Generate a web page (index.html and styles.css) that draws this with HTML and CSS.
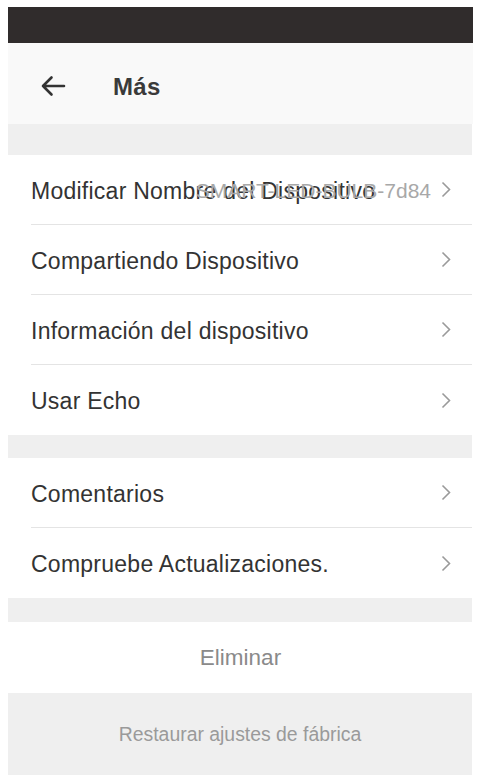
FILE: index.html
```html
<!DOCTYPE html>
<html lang="es">
<head>
<meta charset="utf-8">
<title>Más</title>
<link rel="stylesheet" href="styles.css">
</head>
<body>
<div class="screen">
  <div class="statusbar"></div>
  <header class="topbar">
    <svg class="back" width="26" height="22" viewBox="0 0 26 22" aria-hidden="true">
      <path d="M24 11H3M11.5 2.5L3 11l8.5 8.5" fill="none" stroke="#333" stroke-width="2.6" stroke-linecap="round" stroke-linejoin="round"/>
    </svg>
    <h1 class="title">Más</h1>
  </header>
  <div class="gap gap-top"></div>
  <ul class="card">
    <li class="row">
      <div class="row-text">
        <span class="label">Modificar Nombre del Dispositivo</span>
        <span class="value">SMART-LED-BULB-7d84</span>
      </div>
      <svg class="chev" width="10" height="17" viewBox="0 0 10 17" aria-hidden="true"><path d="M1.5 1.5l7 7-7 7" fill="none" stroke="#9a9a9a" stroke-width="1.6"/></svg>
    </li>
    <li class="row">
      <div class="row-text"><span class="label">Compartiendo Dispositivo</span></div>
      <svg class="chev" width="10" height="17" viewBox="0 0 10 17" aria-hidden="true"><path d="M1.5 1.5l7 7-7 7" fill="none" stroke="#9a9a9a" stroke-width="1.6"/></svg>
    </li>
    <li class="row">
      <div class="row-text"><span class="label">Información del dispositivo</span></div>
      <svg class="chev" width="10" height="17" viewBox="0 0 10 17" aria-hidden="true"><path d="M1.5 1.5l7 7-7 7" fill="none" stroke="#9a9a9a" stroke-width="1.6"/></svg>
    </li>
    <li class="row last">
      <div class="row-text"><span class="label">Usar Echo</span></div>
      <svg class="chev" width="10" height="17" viewBox="0 0 10 17" aria-hidden="true"><path d="M1.5 1.5l7 7-7 7" fill="none" stroke="#9a9a9a" stroke-width="1.6"/></svg>
    </li>
  </ul>
  <div class="gap gap-mid"></div>
  <ul class="card">
    <li class="row">
      <div class="row-text"><span class="label">Comentarios</span></div>
      <svg class="chev" width="10" height="17" viewBox="0 0 10 17" aria-hidden="true"><path d="M1.5 1.5l7 7-7 7" fill="none" stroke="#9a9a9a" stroke-width="1.6"/></svg>
    </li>
    <li class="row last">
      <div class="row-text"><span class="label">Compruebe Actualizaciones.</span></div>
      <svg class="chev" width="10" height="17" viewBox="0 0 10 17" aria-hidden="true"><path d="M1.5 1.5l7 7-7 7" fill="none" stroke="#9a9a9a" stroke-width="1.6"/></svg>
    </li>
  </ul>
  <div class="gap gap-bottom"></div>
  <div class="delete">Eliminar</div>
  <div class="reset">Restaurar ajustes de fábrica</div>
</div>
</body>
</html>
```
FILE: styles.css
```css
html, body {
  margin: 0;
  padding: 0;
  background: #ffffff;
}
body {
  font-family: "Liberation Sans", Arial, sans-serif;
  color: #333333;
}
.screen {
  width: 465px;
  margin: 7px 0 0 8px;
  display: flex;
  flex-direction: column;
}
.statusbar {
  height: 36px;
  background: #302c2c;
}
.topbar {
  height: 81px;
  background: #f9f9f9;
  display: flex;
  align-items: center;
  padding-left: 32px;
}
.back {
  display: block;
  margin-top: 4px;
}
.title {
  margin: 6px 0 0 47px;
  font-size: 24px;
  font-weight: bold;
  color: #3a3a3a;
  line-height: 1;
  letter-spacing: 0.3px;
}
.gap {
  background: #efefef;
  margin-right: 1px;
}
.gap-top { height: 31px; }
.gap-mid { height: 23px; }
.gap-bottom { height: 24px; }
.card {
  list-style: none;
  margin: 0;
  padding: 0 0 0 23px;
  background: #ffffff;
  margin-right: 1px;
}
.row {
  box-sizing: border-box;
  height: 70px;
  display: flex;
  align-items: center;
  border-bottom: 1px solid #e4e4e4;
  padding-right: 21px;
}
.row.last {
  border-bottom: none;
}
.row-text {
  flex: 1;
  display: grid;
  align-items: center;
  padding-top: 3px;
}
.label {
  grid-area: 1 / 1;
  justify-self: start;
  font-size: 23px;
  color: #333333;
  letter-spacing: 0.25px;
}
.value {
  grid-area: 1 / 1;
  justify-self: end;
  font-size: 21px;
  color: #a8a8a8;
  margin-right: 10px;
}
.chev {
  display: block;
  flex: none;
}
.delete {
  height: 71px;
  display: flex;
  align-items: center;
  justify-content: center;
  font-size: 22.5px;
  color: #8a8a8a;
}
.reset {
  height: 82px;
  display: flex;
  align-items: center;
  justify-content: center;
  background: #efefef;
  font-size: 19.4px;
  color: #9a9a9a;
  margin-right: 1px;
}
```
